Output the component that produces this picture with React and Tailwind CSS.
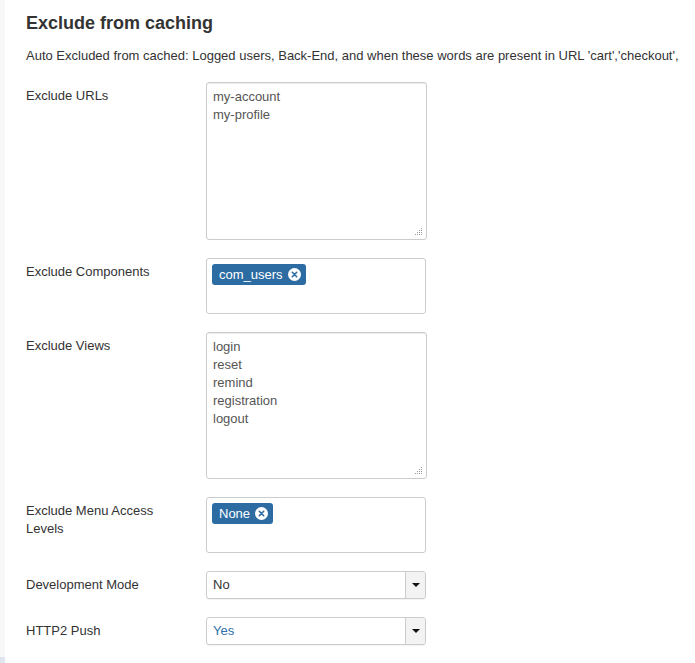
import React from 'react';

const chipBlue = 'bg-[#2d6ca2]';

const Grip = () => (
  <svg className="absolute right-[3px] bottom-[3px]" width="8" height="8" viewBox="0 0 8 8">
    {[[6, 0], [4, 2], [6, 2], [2, 4], [4, 4], [6, 4], [0, 6], [2, 6], [4, 6], [6, 6]]
      .filter(([x, y]) => x + y >= 6)
      .map(([x, y]) => (
        <rect key={`${x}-${y}`} x={x} y={y} width="1" height="1" fill="#9a9a9a" />
      ))}
  </svg>
);

const TextBox = ({ lines, height }) => (
  <div
    className={`relative w-[221px] ${height} border border-[#cccccc] rounded-[3px] bg-white px-[6px] py-[5px] text-[13px] leading-[18px] text-[#555555] shadow-[inset_0_1px_1px_rgba(0,0,0,0.075)]`}
  >
    {lines.map(l => (
      <div key={l}>{l}</div>
    ))}
    <Grip />
  </div>
);

const Chip = ({ label }) => (
  <span className={`inline-flex items-center h-[21px] ${chipBlue} text-white rounded-[3px] pl-[7px] pr-[5px] text-[13px] leading-[21px]`}>
    {label}
    <svg className="ml-[5px]" width="13" height="13" viewBox="0 0 13 13">
      <circle cx="6.5" cy="6.5" r="6.5" fill="#ffffff" />
      <path d="M4.3 4.3 L8.7 8.7 M8.7 4.3 L4.3 8.7" stroke="#2d6ca2" strokeWidth="1.6" strokeLinecap="round" />
    </svg>
  </span>
);

const ChipBox = ({ label }) => (
  <div className="w-[220px] h-[56px] border border-[#cccccc] rounded-[3px] bg-white px-[5px] py-[3px]">
    <Chip label={label} />
  </div>
);

const Select = ({ value, blue }) => (
  <div className="flex w-[220px] h-[28px] border border-[#cccccc] rounded-[3px] bg-white overflow-hidden shadow-[0_1px_1px_rgba(0,0,0,0.05)]">
    <div className={`flex-1 px-[6px] text-[13px] leading-[26px] ${blue ? 'text-[#3071a9]' : 'text-[#333333]'}`}>{value}</div>
    <div className="w-[20px] flex items-center justify-center bg-[#f3f3f3] border-l border-[#cccccc]">
      <svg width="8" height="4" viewBox="0 0 8 4">
        <path d="M0 0 L8 0 L4 4 Z" fill="#111111" />
      </svg>
    </div>
  </div>
);

const Row = ({ label, children }) => (
  <div className="flex mb-[18px]">
    <div className="w-[180px] shrink-0 pr-[20px] pt-[5px] text-[13px] leading-[18px] text-[#333333]">{label}</div>
    <div>{children}</div>
  </div>
);

export default function App() {
  return (
    <div className="flex min-h-[663px] w-[695px] bg-white font-['Liberation_Sans',Arial,sans-serif] overflow-hidden">
      <div className="w-[5px] shrink-0 bg-[#f8f8f8] flex flex-col justify-end">
        <div className="h-[6px] bg-[#dfe6ef]" />
      </div>
      <div className="flex-1 pl-[21px] pt-[12px] whitespace-nowrap">
        <h2 className="text-[18px] leading-[22px] font-bold text-[#333333]">Exclude from caching</h2>
        <p className="mt-[13px] text-[13px] leading-[18px] text-[#333333]">
          Auto Excluded from cached: Logged users, Back-End, and when these words are present in URL 'cart','checkout',
        </p>
        <div className="mt-[17px]">
          <Row label="Exclude URLs">
            <TextBox lines={['my-account', 'my-profile']} height="h-[158px]" />
          </Row>
          <Row label="Exclude Components">
            <ChipBox label="com_users" />
          </Row>
          <Row label="Exclude Views">
            <TextBox lines={['login', 'reset', 'remind', 'registration', 'logout']} height="h-[147px]" />
          </Row>
          <Row label={<span className="whitespace-normal block">Exclude Menu Access Levels</span>}>
            <ChipBox label="None" />
          </Row>
          <Row label="Development Mode">
            <Select value="No" />
          </Row>
          <Row label="HTTP2 Push">
            <Select value="Yes" blue />
          </Row>
        </div>
      </div>
    </div>
  );
}
